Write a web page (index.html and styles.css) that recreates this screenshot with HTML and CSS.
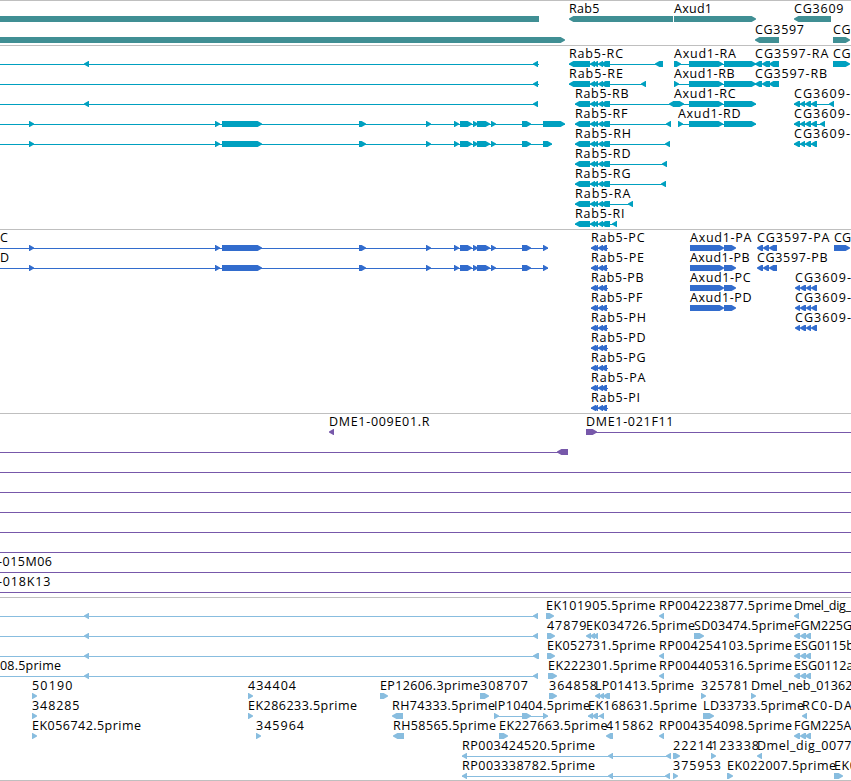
FILE: index.html
```
<!DOCTYPE html>
<html lang="en">
<head>
<meta charset="utf-8">
<title>Genome browser</title>
<link rel="stylesheet" href="styles.css">
</head>
<body>
<main class="browser" id="browser"></main>
<script src="tracks.js"></script>
</body>
</html>
```
FILE: styles.css
```
body {
  margin: 0;
  background: #fff;
}

.browser {
  display: flex;
  flex-direction: column;
  width: 851px;
  height: 781px;
  overflow: hidden;
  border-bottom: 1px solid #bfbfbf;
  box-sizing: border-box;
}

.track {
  flex: 0 0 auto;
  border-top: 1px solid #bfbfbf;
}

.track svg {
  display: block;
  width: 851px;
  overflow: hidden;
}

.shape {
  fill: currentColor;
  shape-rendering: crispEdges;
}

.tip {
  fill: currentColor;
}

.label {
  fill: #000;
  font-family: "Open Sans", "DejaVu Sans", sans-serif;
  font-size: 12.5px;
}

.gene { color: #408f94; }
.transcript { color: #00a0c0; }
.protein { color: #326ccd; }
.clone { color: #7758aa; }
.est { color: #88bddf; }
```
FILE: tracks.js
```
// Row items: label [text, start, end], intron line {l: [start, end]},
// exons {r: [[start, end]...]} pointing right, {f: [...]} pointing left, {b: [...]} blunt.
const T = (text, a, b) => ({ t: [text, a, b] });
const L = (a, b) => ({ l: [a, b] });
const R = (...r) => ({ r });
const F = (...f) => ({ f });
const B = (...b) => ({ b });

const exons = [[29, 34], [215, 220], [222, 262], [359, 366], [426, 431], [454, 459],
  [460, 472], [473, 478], [477, 490], [491, 496], [522, 531]];

const rab = (name, x, end, tip) => [T(name, x, end), L(x, tip),
  F([x, 590], [590, 595], [593, 598], [598, 603], [601, 610], [tip - 5, tip])];
const axud = (name, x, end, first) => [T(name, x, end), L(first[0], 756),
  R(first, [689, 723], [724, 756])];
const cg97 = (name, end) => [T(name, 755, end), F([755, 762], [762, 770], [769, 779])];
const cg09 = (tip) => [T("CG3609-", 794, 850), L(794, tip),
  F([794, 800], [800, 805], [805, 811], [811, 817], [tip - 5, tip])];

const rabP = (s, end) => [T("Rab5-P" + s, 591, end), L(591, 608),
  F([591, 596], [593, 598], [598, 603], [601, 607])];
const axudP = (s, end) => [T("Axud1-P" + s, 690, end), R([690, 724], [724, 736])];
const cg97P = (s, end) => [T("CG3597-P" + s, 757, end), F([757, 763], [763, 769], [769, 777])];
const cg09P = [T("CG3609-", 795, 851), F([795, 800], [800, 806], [806, 811], [811, 817])];
const three = F([794, 800], [800, 806], [805, 811]);
const estLine = [L(0, 538), F([84, 89], [533, 538])];
const full = [L(0, 851)];

const tracks = [
  { kind: "gene", height: 44, step: 21, rows: [
    [B([0, 539]), T("Rab5", 569, 599.5), F([569, 673]), T("Axud1", 674, 712), R([674, 756]),
      T("CG3609", 794, 843.5), F([794, 831])],
    [R([-9, 565]), T("CG3597", 755, 804), F([755, 779]), T("CG", 833, 850.5), R([833, 850])],
  ] },
  { kind: "transcript", height: 183, step: 20, rows: [
    [L(0, 539), F([84, 89], [533, 538]), ...rab("Rab5-RC", 569, 623, 663), F([655, 663]),
      ...axud("Axud1-RA", 674, 736, [674, 681]), ...cg97("CG3597-RA", 828.5), T("CG", 833, 850.5), R([833, 850])],
    [L(0, 539), F([533, 538]), ...rab("Rab5-RE", 569, 623, 646),
      ...axud("Axud1-RB", 674, 734.5, [674, 679]), ...cg97("CG3597-RB", 827)],
    [L(0, 538), F([84, 89], [533, 538]), ...rab("Rab5-RB", 575, 628.5, 674),
      ...axud("Axud1-RC", 674, 735.5, [673, 684]), ...cg09(834)],
    [L(0, 565), R(...exons, [543, 565]), ...rab("Rab5-RF", 575, 627.5, 671),
      ...axud("Axud1-RD", 678, 740.5, [678, 683]), ...cg09(825)],
    [L(0, 552), R(...exons, [543, 552]), ...rab("Rab5-RH", 575, 631, 670), ...cg09(817)],
    rab("Rab5-RD", 575, 630.5, 667),
    rab("Rab5-RG", 575, 630.5, 666),
    rab("Rab5-RA", 575, 630.5, 633),
    rab("Rab5-RI", 575, 624.5, 617),
  ] },
  { kind: "protein", height: 183, step: 20, rows: [
    [T("C", 0, 8), L(0, 548), R(...exons, [543, 548]), ...rabP("C", 644.5), ...axudP("A", 751.5),
      ...cg97P("A", 829.5), T("CG", 834, 851), R([834, 850])],
    [T("D", 0, 9), L(0, 548), R(...exons, [543, 548]), ...rabP("E", 644), ...axudP("B", 749.5), ...cg97P("B", 827.5)],
    [...rabP("B", 643.5), ...axudP("C", 750.5), ...cg09P],
    [...rabP("F", 642.5), ...axudP("D", 751.5), ...cg09P],
    [...rabP("H", 646), ...cg09P],
    rabP("D", 645.5), rabP("G", 645.5), rabP("A", 645.5), rabP("I", 640),
  ] },
  { kind: "clone", height: 183, step: 20, rows: [
    [T("DME1-009E01.R", 329, 429.5), F([329, 334]), T("DME1-021F11", 586, 673.5), L(586, 851), R([586, 597])],
    [L(0, 568), F([557, 568])],
    full, full, full, full, full,
    [T("-015M06", -2, 52), ...full],
    [T("-018K13", -2, 50.5), ...full],
  ] },
  { kind: "est", height: 182, step: 20, rows: [
    [...estLine, T("EK101905.5prime", 546, 655.5), R([546, 554]), T("RP004223877.5prime", 659, 792),
      F([659, 664]), T("Dmel_dig_", 794, 851), F([794, 799])],
    [...estLine, T("47879", 547, 586.5), R([547, 555]), T("EK034726.5prime", 586, 695),
      F([586, 591], [590, 595], [593, 598]), T("SD03474.5prime", 694, 794.5), R([694, 704]),
      T("FGM225G", 794, 852), three],
    [...estLine, B([538, 539]), T("EK052731.5prime", 547, 655.5), R([547, 555]), T("RP004254103.5prime", 659, 792),
      F([659, 664]), T("ESG0115b", 794, 854), three],
    [T("08.5prime", 0, 61), ...estLine, T("EK222301.5prime", 548, 656.5), R([548, 557]),
      T("RP004405316.5prime", 659, 792), F([659, 664]), T("ESG0112a", 794, 853.5), three],
    [T("50190", 32, 72.5), R([32, 37]), T("434404", 248, 296), R([248, 253]), T("EP12606.3prime", 380, 480),
      R([380, 388]), T("308707", 480, 528), R([480, 489]), T("364858", 549, 597), R([549, 557]),
      T("LP01413.5prime", 595, 694), F([595, 600], [599, 604], [603, 610]), T("325781", 701, 749), R([701, 706]),
      T("Dmel_neb_01362", 751, 852.5), R([751, 756])],
    [T("348285", 32, 79.5), R([32, 37]), T("EK286233.5prime", 248, 357), R([248, 253]),
      T("RH74333.5prime", 392, 495), F([392, 403]), T("IP10404.5prime", 494, 590), L(494, 548),
      R([494, 499], [522, 531], [543, 548]), T("EK168631.5prime", 588, 697), L(588, 604),
      F([588, 593], [592, 598], [599, 604]), T("LD33733.5prime", 703, 804), R([703, 714]),
      T("RC0-DA", 802, 852), F([802, 807])],
    [T("EK056742.5prime", 32, 141), R([32, 37]), T("345964", 256, 304), R([256, 261]),
      T("RH58565.5prime", 393, 496), F([393, 404]), T("EK227663.5prime", 499, 607.5), R([499, 508]),
      T("415862", 606, 653.5), F([606, 613]), T("RP004354098.5prime", 659, 792), F([659, 664]),
      T("FGM225A", 794, 851.5), three],
    [T("RP003424520.5prime", 462, 595), L(462, 671), F([462, 467], [608, 613], [666, 671]),
      T("22214", 673, 713), R([673, 680]), T("123338", 711, 759), R([711, 716]),
      T("Dmel_dig_0077", 757, 851.5), F([757, 762])],
    [T("RP003338782.5prime", 462, 595), L(462, 670), F([462, 467], [608, 613], [665, 670]),
      T("375953", 673, 721), R([673, 678]), T("EK022007.5prime", 727, 836), R([727, 733]),
      T("EK0", 834, 857), R([834, 843])],
  ] },
];

const rect = (x, y, w, h) => `<rect class="shape" x="${x}" y="${y}" width="${w}" height="${h}"/>`;

// An exon is six pixels tall; its tip takes up to five pixels of its length.
function exon(a, b, top, dir) {
  const w = b - a, tip = Math.min(w, 5), mid = top + 3, base = top + 6;
  const body = w > tip ? rect(dir > 0 ? a : a + tip, top, w - tip, 6) : "";
  const root = dir > 0 ? b - tip : a + tip;
  const end = dir > 0 ? b : a;
  return body + `<polygon class="tip" points="${root},${top} ${root + dir * 0.6},${top} ${end},${mid - 0.6} ${end},${mid + 0.6} ${root + dir * 0.6},${base} ${root},${base}"/>`;
}

function draw(item, y) {
  if (item.l) return rect(item.l[0], y, item.l[1] - item.l[0], 1);
  if (item.b) return item.b.map(([a, b]) => rect(a, y - 3, b - a, 6)).join("");
  if (item.r) return item.r.map(([a, b]) => exon(a, b, y - 3, 1)).join("");
  if (item.f) return item.f.map(([a, b]) => exon(a, b, y - 3, -1)).join("");
  const [text, a, b] = item.t;
  return `<text class="label" x="${a}" y="${y - 6}" textLength="${b - a}">${text}</text>`;
}

document.getElementById("browser").innerHTML = tracks.map((track) => {
  const body = track.rows.map((row, i) =>
    row.map((item) => draw(item, 18 + i * track.step)).join("")).join("");
  return `<section class="track ${track.kind}"><svg height="${track.height}">${body}</svg></section>`;
}).join("");
```
